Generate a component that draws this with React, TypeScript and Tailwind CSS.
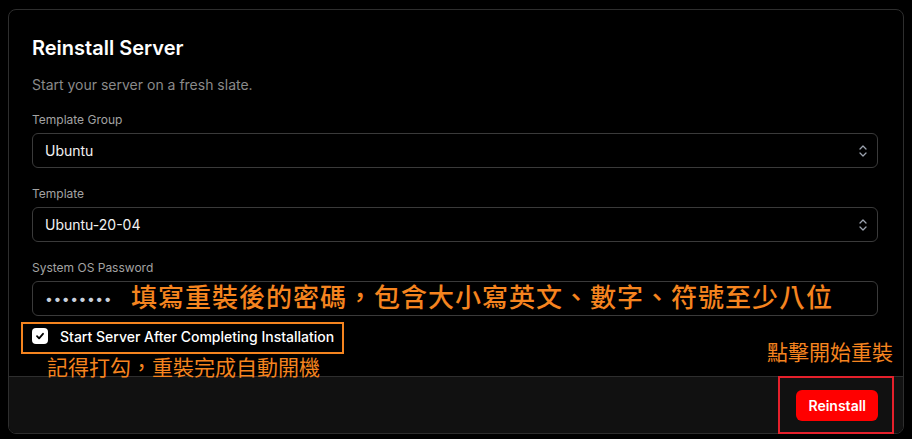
import React from 'react';

const font = { fontFamily: 'Inter, "Noto Sans CJK TC", sans-serif' };

function UpDown() {
  return (
    <svg width="10" height="14" viewBox="0 0 10 14" fill="none" stroke="#9ca3af" strokeWidth="1.3" strokeLinecap="round" strokeLinejoin="round">
      <path d="M2 5 L5 2 L8 5" />
      <path d="M2 9 L5 12 L8 9" />
    </svg>
  );
}

function SelectBox({ value }: { value: string }) {
  return (
    <div className="flex h-[35px] items-center justify-between rounded-md border border-[#3a3a3a] bg-black pl-[12px] pr-[9px] text-[14px] text-[#f2f2f2]">
      <span>{value}</span>
      <UpDown />
    </div>
  );
}

function Label({ children }: { children: React.ReactNode }) {
  return <div className="mb-[5px] text-[12px] leading-[16px] text-[#a3a3a3]">{children}</div>;
}

export default function App() {
  return (
    <div className="relative h-[439px] w-[912px] overflow-hidden bg-black" style={font}>
      <div className="ml-[8px] mt-[9px] w-[896px] overflow-hidden rounded-lg border border-[#2e2e2e] bg-black">
        <div className="pl-[23px] pr-[25px] pt-[24px]">
          <h2 className="text-[20px] font-semibold leading-[28px] text-white">Reinstall Server</h2>
          <p className="mt-[13px] text-[14px] leading-[20px] text-[#8a8a8a]">Start your server on a fresh slate.</p>

          <div className="mt-[17px]">
            <Label>Template Group</Label>
            <SelectBox value="Ubuntu" />
          </div>
          <div className="mt-[18px]">
            <Label>Template</Label>
            <SelectBox value="Ubuntu-20-04" />
          </div>
          <div className="mt-[18px]">
            <Label>System OS Password</Label>
            <div className="flex h-[35px] items-center rounded-md border border-[#3a3a3a] bg-black pl-[12px] text-[14px] tracking-[0.5px] text-[#c8d0dc]">
              ••••••••
            </div>
          </div>

          <div className="mt-[12px] flex h-[16px] items-center gap-[12px]">
            <div className="flex h-[16px] w-[16px] items-center justify-center rounded-[4px] bg-white">
              <svg width="10" height="10" viewBox="0 0 10 10" fill="none" stroke="#000" strokeWidth="1.8" strokeLinecap="round" strokeLinejoin="round">
                <path d="M2 5.2 L4.1 7.3 L8 2.8" />
              </svg>
            </div>
            <span className="text-[14px] font-medium text-white">Start Server After Completing Installation</span>
          </div>
        </div>

        <div className="mt-[32px] flex h-[57px] items-center justify-end border-t border-[#2e2e2e] bg-[#111111] px-[25px]">
          <button className="h-[31px] rounded-md bg-[#ff0000] px-[12px] text-[14px] font-semibold text-white">Reinstall</button>
        </div>
      </div>

      {/* annotations */}
      <div className="absolute left-[131px] top-[281px] text-[26px] font-medium leading-[34px] tracking-[1px] text-[#f5841f] whitespace-nowrap">
        填寫重裝後的密碼，包含大小寫英文、數字、符號至少八位
      </div>
      <div className="absolute left-[21px] top-[322px] h-[32px] w-[323px] border-2 border-[#f5841f]" />
      <div className="absolute left-[47px] top-[353px] text-[21px] leading-[30px] text-[#f5841f] whitespace-nowrap">記得打勾，重裝完成自動開機</div>
      <div className="absolute left-[767px] top-[338px] text-[21px] leading-[30px] text-[#f5841f] whitespace-nowrap">點擊開始重裝</div>
      <div className="absolute left-[778px] top-[376px] h-[58px] w-[116px] border-2 border-[#e5202b]" />
    </div>
  );
}
